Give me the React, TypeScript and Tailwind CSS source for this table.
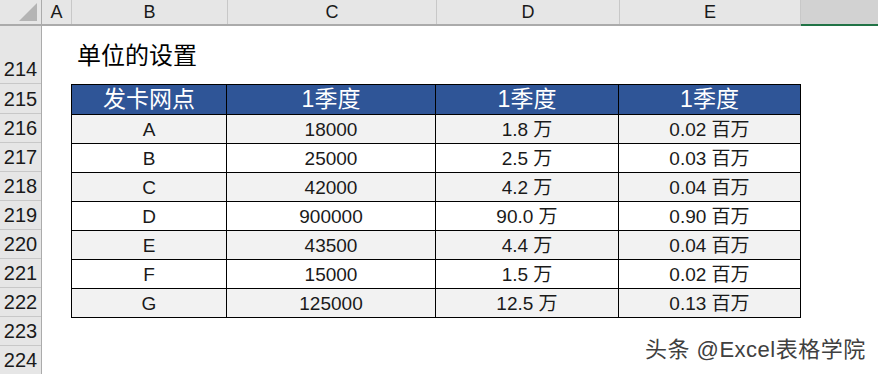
import React from "react";

const rows = [
  ["A", "18000", "1.8 万", "0.02 百万"],
  ["B", "25000", "2.5 万", "0.03 百万"],
  ["C", "42000", "4.2 万", "0.04 百万"],
  ["D", "900000", "90.0 万", "0.90 百万"],
  ["E", "43500", "4.4 万", "0.04 百万"],
  ["F", "15000", "1.5 万", "0.02 百万"],
  ["G", "125000", "12.5 万", "0.13 百万"],
];

const font = { fontFamily: '"Liberation Sans", "Noto Sans CJK SC", sans-serif' };

export default function App() {
  const rowNums = ["214", "215", "216", "217", "218", "219", "220", "221", "222", "223", "224"];
  return (
    <div className="relative w-[878px] h-[374px] overflow-hidden bg-white text-[#1a1a1a]" style={font}>
      {/* column header */}
      <div className="flex h-[26px] bg-[#e6e6e6] border-b-2 border-[#ababab]">
        <div className="relative w-[42px] shrink-0 border-r border-[#ababab]">
          <div className="absolute right-[4px] bottom-[3px] w-0 h-0 border-l-[18px] border-l-transparent border-b-[18px] border-b-[#b4b4b4]" />
        </div>
        {[
          ["A", "w-[30px]"],
          ["B", "w-[156px]"],
          ["C", "w-[209px]"],
          ["D", "w-[183px]"],
          ["E", "w-[181px]"],
        ].map(([l, w]) => (
          <div key={l} className={`${w} shrink-0 flex items-center justify-center border-r border-[#c8c8c8] text-[18px] leading-none`}>
            {l}
          </div>
        ))}
        <div className="flex-1 bg-[#d2d2d2] border-b-2 border-[#217346] -mb-[2px]" />
      </div>
      <div className="flex">
        {/* row headers */}
        <div className="w-[42px] shrink-0 bg-[#e6e6e6] border-r border-[#ababab] flex flex-col">
          {rowNums.map((n, i) => (
            <div
              key={n}
              className={`${i === 0 ? "h-[58px]" : i === 1 ? "h-[30px]" : "h-[29px]"} shrink-0 border-b border-[#c8c8c8] flex items-end justify-center text-[20px] leading-none pb-[4px]`}
            >
              {n}
            </div>
          ))}
        </div>
        {/* sheet */}
        <div className="flex-1 pl-[29px]">
          <div className="h-[58px] flex items-center pl-[6px] pt-[2px] text-[24px] text-black">单位的设置</div>
          <div className="w-[730px] border border-black">
            <div className="grid grid-cols-[155px_209px_183px_181px] h-[29px] bg-[#2f5597] text-white text-[23px] leading-none">
              {["发卡网点", "1季度", "1季度", "1季度"].map((t, i) => (
                <div key={i} className={`flex items-center justify-center ${i < 3 ? "border-r border-black" : ""}`}>
                  {t}
                </div>
              ))}
            </div>
            {rows.map((r, ri) => (
              <div
                key={ri}
                className={`grid grid-cols-[155px_209px_183px_181px] h-[29px] border-t border-black text-[19px] leading-none ${ri % 2 === 0 ? "bg-[#f2f2f2]" : "bg-white"}`}
              >
                {r.map((t, i) => (
                  <div key={i} className={`flex items-center justify-center ${i < 3 ? "border-r border-black" : ""}`}>
                    {t}
                  </div>
                ))}
              </div>
            ))}
          </div>
        </div>
      </div>
      <div
        className="absolute left-[645px] top-[339px] text-[22px] tracking-[0.5px] leading-none text-[#404040]"
        style={{ textShadow: "0 0 2px #fff, 0 0 2px #fff" }}
      >
        头条 @Excel表格学院
      </div>
    </div>
  );
}
